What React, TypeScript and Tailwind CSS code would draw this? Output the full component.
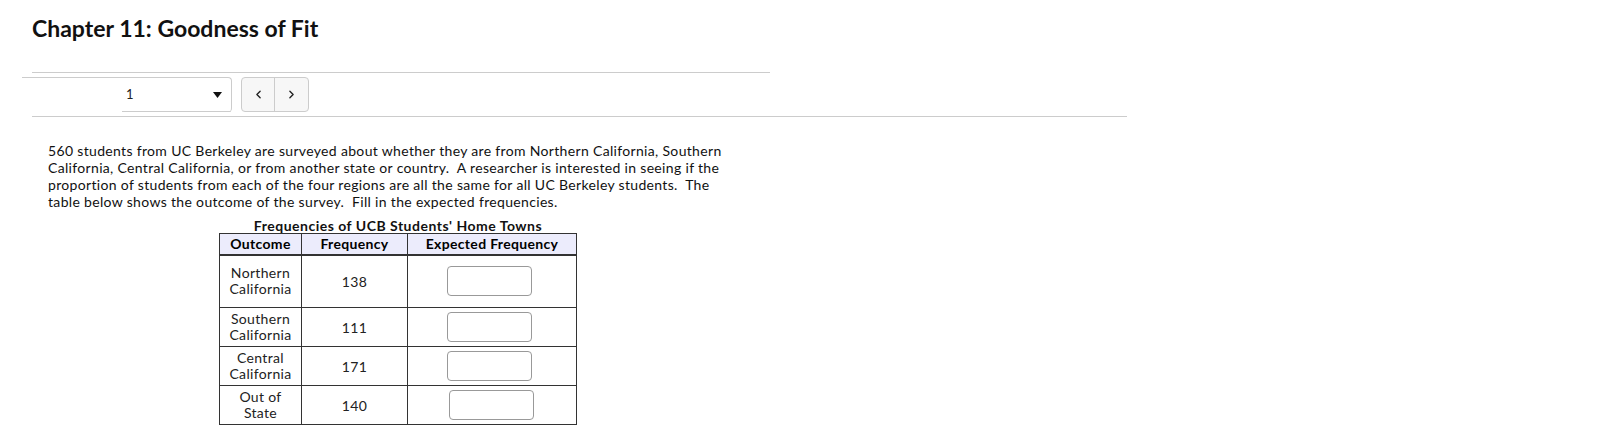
import { ChevronLeft, ChevronRight } from "lucide-react";

const rows = [
    { outcome: ["Northern", "California"], freq: 138, h: "h-[53px]", pad: "pr-[6px]" },
    { outcome: ["Southern", "California"], freq: 111, h: "h-[39px]", pad: "pr-[6px]" },
    { outcome: ["Central", "California"], freq: 171, h: "h-[39px]", pad: "pr-[6px]" },
    { outcome: ["Out of", "State"], freq: 140, h: "h-[39px]", pad: "pr-[2px]" },
];

export default function App() {
    return (
        <div className="min-h-screen bg-white font-['Lato','Liberation_Sans',sans-serif] text-black tracking-[0.33px]">
            {/* Title */}
            <div className="pl-[32px] pt-[14px]">
                <h1 className="text-[23px] font-bold leading-[28px] text-[#111] tracking-normal">Chapter 11: Goodness of Fit</h1>
            </div>

            {/* Question nav */}
            <div className="mt-[30px] w-[1127px]">
                <div className="ml-[32px] w-[738px] border-t border-[#cccccc]"></div>
                <div className="flex items-start gap-[9px] pt-[4px] pl-[22px] h-[43px]">
                    <div className="w-[210px] h-[35px] border-t border-r border-[#cccccc] rounded-tr-[4px] rounded-br-[4px] flex flex-col">
                        <div className="flex-1 flex items-center pl-[104px] pr-[9px] justify-between text-[13px] text-[#222]">
                            <span>1</span>
                            <svg width="9" height="6" viewBox="0 0 9 6"><path d="M0 0 L9 0 L4.5 6 Z" fill="#111" /></svg>
                        </div>
                        <div className="ml-[100px] border-b border-[#cccccc] rounded-br-[4px]"></div>
                    </div>
                    <div className="flex h-[35px] border border-[#cccccc] rounded-[4px] bg-[#f7f7f7]">
                        <button className="w-[33px] flex items-center justify-center border-r border-[#cccccc] text-[#222]">
                            <ChevronLeft className="w-[13px] h-[13px]" strokeWidth={2.5} />
                        </button>
                        <button className="w-[33px] flex items-center justify-center text-[#222]">
                            <ChevronRight className="w-[13px] h-[13px]" strokeWidth={2.5} />
                        </button>
                    </div>
                </div>
                <div className="ml-[32px] border-t border-[#cccccc]"></div>
            </div>

            {/* Question body */}
            <div className="pl-[48px] pt-[25px]">
                <p className="text-[14px] leading-[17px] text-[#111]">
                    560 students from UC Berkeley are surveyed about whether they are from Northern California, Southern
                    <br />
                    California, Central California, or from another state or country.&nbsp; A researcher is interested in seeing if the
                    <br />
                    proportion of students from each of the four regions are all the same for all UC Berkeley students.&nbsp; The
                    <br />
                    table below shows the outcome of the survey.&nbsp; Fill in the expected frequencies.
                </p>

                <div className="ml-[171px] mt-[8px] w-[358px]">
                    <div className="text-center text-[14px] font-bold leading-[15px] text-[#111] tracking-[0.5px]">
                        Frequencies of UCB Students' Home Towns
                    </div>
                    <table className="w-[358px] border-collapse border border-[#333] text-[14px] text-[#222]">
                        <thead>
                            <tr className="bg-[#ececfc] h-[21px]">
                                <th className="w-[82px] border border-[#333] border-b-2 font-bold text-black leading-[16px]">Outcome</th>
                                <th className="w-[106px] border border-[#333] border-b-2 font-bold text-black leading-[16px]">Frequency</th>
                                <th className="border border-[#333] border-b-2 font-bold text-black leading-[16px]">Expected Frequency</th>
                            </tr>
                        </thead>
                        <tbody>
                            {rows.map((r) => (
                                <tr key={r.freq} className={r.h}>
                                    <td className="border border-[#333] text-center leading-[16px]">
                                        {r.outcome[0]}
                                        <br />
                                        {r.outcome[1]}
                                    </td>
                                    <td className="border border-[#333] text-center">{r.freq}</td>
                                    <td className={`border border-[#333] ${r.pad}`}>
                                        <div className="flex justify-center">
                                            <input
                                                type="text"
                                                className="w-[85px] h-[30px] border border-[#999] rounded-[4px] bg-white outline-none"
                                            />
                                        </div>
                                    </td>
                                </tr>
                            ))}
                        </tbody>
                    </table>
                </div>
            </div>
        </div>
    );
}
